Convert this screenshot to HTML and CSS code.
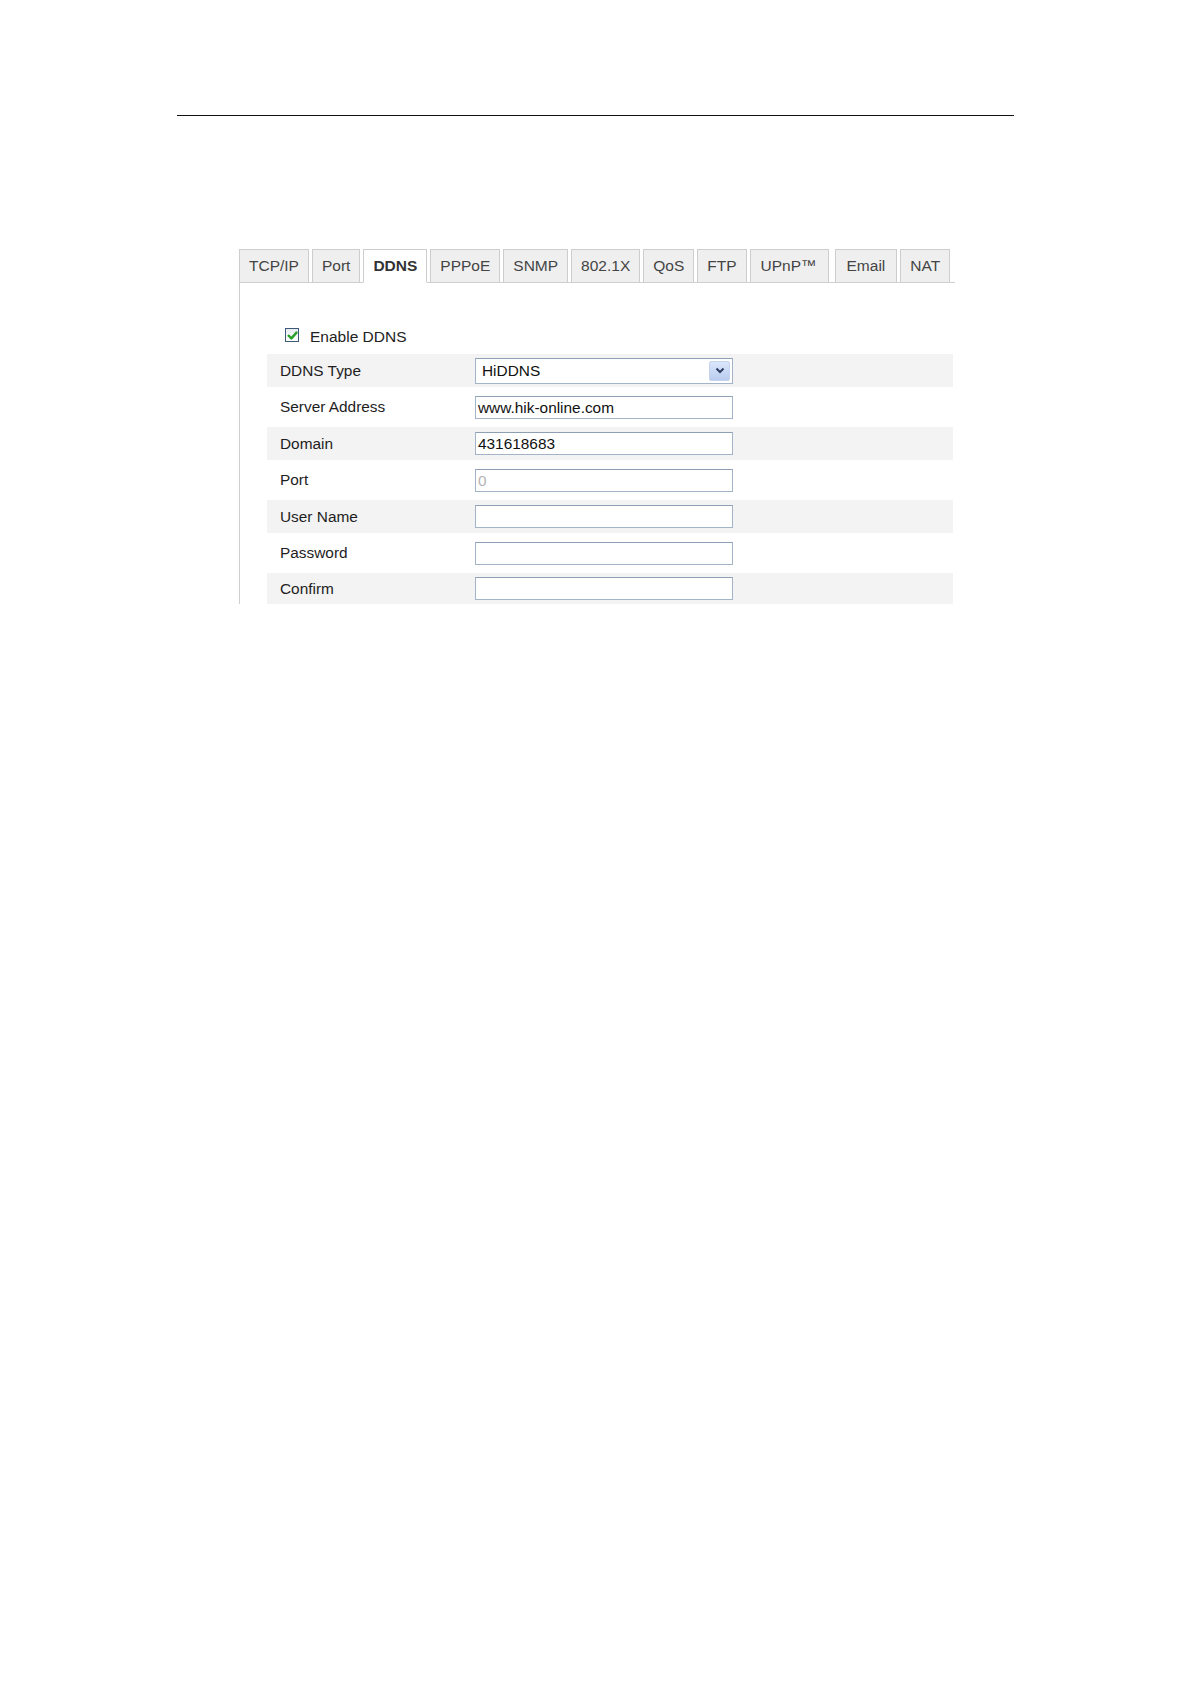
FILE: index.html
```html
<!DOCTYPE html>
<html>
<head>
<meta charset="utf-8">
<link rel="stylesheet" href="styles.css">
</head>
<body>
<div class="page">
  <div class="rule"></div>
  <div class="widget">
    <div class="tabs">
      <div class="tab">TCP/IP</div>
      <div class="tab">Port</div>
      <div class="tab active">DDNS</div>
      <div class="tab">PPPoE</div>
      <div class="tab">SNMP</div>
      <div class="tab">802.1X</div>
      <div class="tab">QoS</div>
      <div class="tab">FTP</div>
      <div class="tab tab-upnp">UPnP™</div>
      <div class="tab tab-email">Email</div>
      <div class="tab">NAT</div>
    </div>
    <div class="panel">
      <div class="check-row">
        <span class="checkbox">
          <svg width="11" height="11" viewBox="0 0 10 10"><path d="M1.5 5.2 L4 7.6 L8.6 2.4" fill="none" stroke="#2aa02a" stroke-width="2.2" stroke-linecap="round" stroke-linejoin="round"/></svg>
        </span>
        <span class="check-label">Enable DDNS</span>
      </div>
      <div class="form">
        <div class="row band">
          <span class="label">DDNS Type</span>
          <div class="select">
            <span class="select-text">HiDDNS</span>
            <span class="select-btn">
              <svg width="10" height="7" viewBox="0 0 10 7"><path d="M1.5 1.5 L5 5 L8.5 1.5" fill="none" stroke="#2e3d66" stroke-width="2"/></svg>
            </span>
          </div>
        </div>
        <div class="row plain">
          <span class="label">Server Address</span>
          <div class="input">www.hik-online.com</div>
        </div>
        <div class="row band">
          <span class="label">Domain</span>
          <div class="input">431618683</div>
        </div>
        <div class="row plain">
          <span class="label">Port</span>
          <div class="input disabled">0</div>
        </div>
        <div class="row band">
          <span class="label">User Name</span>
          <div class="input"></div>
        </div>
        <div class="row plain">
          <span class="label">Password</span>
          <div class="input"></div>
        </div>
        <div class="row band last">
          <span class="label">Confirm</span>
          <div class="input"></div>
        </div>
      </div>
    </div>
  </div>
</div>
</body>
</html>
```
FILE: styles.css
```css
* { box-sizing: border-box; }
html, body { margin: 0; padding: 0; background: #ffffff; }
body {
  font-family: "Liberation Sans", Arial, sans-serif;
  color: #222222;
}
.page {
  width: 1191px;
  min-height: 1684px;
  padding-top: 115px;
}
.rule {
  margin-left: 177px;
  width: 837px;
  height: 1px;
  background: #111111;
}
.widget {
  margin-top: 133px;
  margin-left: 239px;
  width: 716px;
}
.tabs {
  display: flex;
  gap: 3px;
  align-items: flex-end;
  border-bottom: 1px solid #cfcfcf;
  height: 34px;
}
.tab {
  height: 34px;
  padding: 0 9px;
  display: flex;
  align-items: center;
  background: #efefef;
  border: 1px solid #cdcdcd;
  font-size: 15.5px;
  color: #444444;
  margin-bottom: -1px;
  border-bottom: 1px solid #cfcfcf;
}
.tab.active {
  background: #ffffff;
  font-weight: bold;
  color: #333333;
  border-bottom: 1px solid #ffffff;
}
.tab.tab-upnp {
  padding: 0 11px 0 10px;
  margin-right: 3px;
}
.tab.tab-email {
  padding: 0 11px;
}
.panel {
  border-left: 1px solid #cfcfcf;
  padding-left: 27px;
  padding-top: 35px;
}
.check-row {
  height: 36px;
  display: flex;
  align-items: center;
  padding-left: 18px;
  gap: 11px;
}
.checkbox {
  width: 14px;
  height: 14px;
  border: 1px solid #3c5a78;
  background: linear-gradient(#e8ecf0, #ffffff);
  display: flex;
  align-items: center;
  justify-content: center;
  margin-top: -2px;
}
.check-label {
  font-size: 15.5px;
  color: #222222;
  margin-top: 2px;
}
.form {
  width: 686px;
}
.row {
  display: flex;
  align-items: center;
  padding-left: 13px;
  font-size: 15.4px;
}
.row.band {
  height: 33px;
  background: #f3f3f3;
}
.row.plain {
  height: 40px;
}
.row.last {
  height: 31px;
}
.label {
  width: 195px;
  flex: none;
  color: #1e1e1e;
}
.input {
  width: 258px;
  height: 23px;
  border: 1px solid #a3b3c8;
  border-top-color: #8fa0b6;
  background: #ffffff;
  font-size: 15.4px;
  line-height: 21px;
  padding-left: 2px;
  color: #111111;
}
.input.disabled {
  color: #b5b5b5;
}
.select {
  width: 258px;
  height: 26px;
  border: 1px solid #a3b3c8;
  border-top-color: #8fa0b6;
  background: #ffffff;
  display: flex;
  align-items: center;
  justify-content: space-between;
  padding-left: 6px;
  padding-right: 2px;
  font-size: 15.4px;
  color: #111111;
}
.select-btn {
  width: 21px;
  height: 20px;
  background: linear-gradient(#dbe6fa, #b9cbef);
  border: 1px solid #c6d3ec;
  border-radius: 2px;
  display: flex;
  align-items: center;
  justify-content: center;
}
```
